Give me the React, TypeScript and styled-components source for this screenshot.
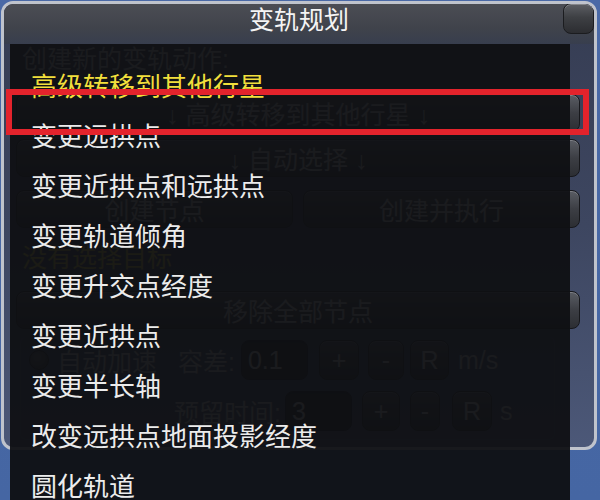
import styled, { createGlobalStyle } from 'styled-components';

const GlobalStyle = createGlobalStyle`
  html, body {
    margin: 0;
    padding: 0;
  }
  body {
    width: 600px;
    height: 500px;
    overflow: hidden;
    background: #4767a4;
    font-family: 'Liberation Sans', 'Noto Sans CJK SC', sans-serif;
  }
`;

const Stage = styled.div`
   position: relative;
   width: 600px;
   height: 500px;
   overflow: hidden;
   box-sizing: border-box;
   padding: 1px 3px 0 1px;
   background: linear-gradient(180deg, #4a69a6 0%, #4566a3 100%);
`;

const Window = styled.div`
   width: 596px;
   height: 449px;
   box-sizing: border-box;
   border: 3px solid #bfc3cc;
   border-radius: 12px;
   overflow: hidden;
   display: flex;
   flex-direction: column;
   background: linear-gradient(180deg, #363d53 0%, #3d4660 50%, #4c5878 100%);
`;

const TitleBar = styled.div`
   position: relative;
   flex: none;
   height: 40px;
   display: flex;
   justify-content: center;
   background: linear-gradient(180deg, #4b4d54 0%, #40434b 60%, #383e4e 100%);
   color: #f4f4f4;
   font-size: 25px;
   line-height: 32px;
`;

const CloseButton = styled.div`
   position: absolute;
   top: -1px;
   right: 0;
   width: 31px;
   height: 31px;
   box-sizing: border-box;
   border-radius: 8px;
   border: 1px solid #1b1c1f;
   background: linear-gradient(180deg, #5d5f64 0%, #3e4044 45%, #2c2d31 100%);
   box-shadow: inset 0 1px 0 rgba(255, 255, 255, 0.25);
`;

const Body = styled.div`
   display: flex;
   flex-direction: column;
   padding: 0 14px 0 12px;
   color: #e6e6e6;
   font-size: 25px;
`;

const Label = styled.div<{ $top: number; $yellow?: boolean }>`
   margin-top: ${({ $top }) => $top}px;
   margin-left: 6px;
   height: 26px;
   line-height: 26px;
   white-space: nowrap;
   color: ${({ $yellow }) => ($yellow ? '#f6e040' : '#dcdcdc')};
`;

const Button = styled.div<{ $top?: number; $w?: number }>`
   margin-top: ${({ $top }) => $top ?? 0}px;
   ${({ $w }) => ($w ? `width: ${$w}px;` : 'flex: 1;')}
   height: 38px;
   box-sizing: border-box;
   display: flex;
   align-items: center;
   justify-content: center;
   gap: 8px;
   border-radius: 8px;
   border: 1px solid #17181c;
   background: linear-gradient(180deg, #5a5d64 0%, #3c3e44 50%, #2c2e33 100%);
   box-shadow: inset 0 1px 0 rgba(255, 255, 255, 0.22);
   white-space: nowrap;
`;

const Pair = styled.div<{ $top: number }>`
   margin-top: ${({ $top }) => $top}px;
   display: flex;
   gap: 10px;
`;

const Group = styled.div`
   margin-top: 8px;
   margin-left: 4px;
   width: 533px;
   padding-bottom: 8px;
   border-radius: 6px;
   border: 1px solid rgba(255, 255, 255, 0.08);
   border-top: none;
`;

const Row = styled.div<{ $pad: number; $top: number }>`
   margin-top: ${({ $top }) => $top}px;
   padding-left: ${({ $pad }) => $pad}px;
   height: 40px;
   display: flex;
   align-items: center;
   white-space: nowrap;
`;

const Toggle = styled.div`
   width: 18px;
   height: 18px;
   border-radius: 50%;
   background: radial-gradient(circle at 40% 35%, #6a6c70, #2a2b2e);
   border: 1px solid #141517;
`;

const Text = styled.span<{ $ml: number }>`
   margin-left: ${({ $ml }) => $ml}px;
   color: #dcdcdc;
`;

const Field = styled.div<{ $ml: number; $w: number }>`
   margin-left: ${({ $ml }) => $ml}px;
   width: ${({ $w }) => $w}px;
   height: 40px;
   box-sizing: border-box;
   padding-left: 6px;
   display: flex;
   align-items: center;
   border-radius: 8px;
   background: #1c1e23;
   border: 1px solid #101114;
   box-shadow: inset 0 2px 3px rgba(0, 0, 0, 0.5);
`;

const Small = styled(Button)<{ $ml: number }>`
   margin-left: ${({ $ml }) => $ml}px;
   height: 40px;
`;

const Dropdown = styled.div`
   position: absolute;
   left: 10px;
   top: 44px;
   width: 560px;
   bottom: 0;
   padding-top: 15px;
   box-sizing: border-box;
   background: rgba(15, 16, 19, 0.95);
   font-family: 'Noto Sans CJK SC', sans-serif;
`;

const Item = styled.div<{ $active?: boolean }>`
   height: 50px;
   display: flex;
   align-items: center;
   padding-left: 21px;
   font-size: 26px;
   color: ${({ $active }) => ($active ? '#f1df3c' : '#ececec')};
`;

const Highlight = styled.div`
   position: absolute;
   left: 6px;
   top: 89px;
   width: 583px;
   height: 46px;
   box-sizing: border-box;
   border: 6px solid #e3232c;
`;

const items = [
   '高级转移到其他行星',
   '变更远拱点',
   '变更近拱点和远拱点',
   '变更轨道倾角',
   '变更升交点经度',
   '变更近拱点',
   '变更半长轴',
   '改变远拱点地面投影经度',
   '圆化轨道',
];

const App = () => {
   return (
      <Stage>
         <GlobalStyle />
         <Window>
            <TitleBar>
               变轨规划
               <CloseButton />
            </TitleBar>
            <Body>
               <Label $top={2}>创建新的变轨动作:</Label>
               <Button $top={22}>↓ 高级转移到其他行星 ↓</Button>
               <Button $top={7}>↓ 自动选择 ↓</Button>
               <Pair $top={13}>
                  <Button>创建节点</Button>
                  <Button>创建并执行</Button>
               </Pair>
               <Label $top={17} $yellow>没有选择目标</Label>
               <Button $top={20}>移除全部节点</Button>
               <Group>
                  <Row $pad={8} $top={3}>
                     <Toggle />
                     <Text $ml={8}>自动加速</Text>
                     <Text $ml={21}>容差:</Text>
                     <Field $ml={6} $w={67}>0.1</Field>
                     <Small $ml={11} $w={40}>+</Small>
                     <Small $ml={9} $w={36}>-</Small>
                     <Small $ml={6} $w={39}>R</Small>
                     <Text $ml={9}>m/s</Text>
                  </Row>
                  <Row $pad={153} $top={11}>
                     <Text $ml={0}>预留时间:</Text>
                     <Field $ml={4} $w={67}>3</Field>
                     <Small $ml={10} $w={38}>+</Small>
                     <Small $ml={10} $w={30}>-</Small>
                     <Small $ml={12} $w={40}>R</Small>
                     <Text $ml={8}>s</Text>
                  </Row>
               </Group>
            </Body>
         </Window>
         <Dropdown>
            {items.map((label, index) => (
               <Item key={index} $active={index === 0}>
                  {label}
               </Item>
            ))}
         </Dropdown>
         <Highlight />
      </Stage>
   );
};

export default App;
